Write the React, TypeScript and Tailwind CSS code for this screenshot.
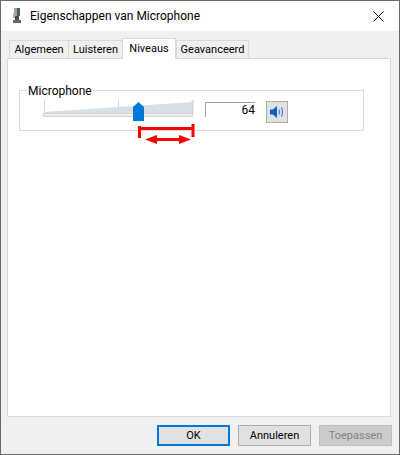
import { Fragment } from "react";

const tabs = [
  { label: "Algemeen", width: "w-[59px]" },
  { label: "Luisteren", width: "w-[54px]" },
  { label: "Niveaus", width: "w-[54px]", active: true },
  { label: "Geavanceerd", width: "w-[73px]" },
];

function MicIcon() {
  return (
    <svg width="16" height="20" viewBox="0 0 16 20">
      <rect x="5" y="2" width="3" height="8" fill="#a0a0a0" />
      <rect x="8" y="2" width="3" height="8" fill="#5a5a5a" />
      <rect x="6" y="10" width="4" height="4" fill="#4a4a4a" />
      <rect x="4" y="8" width="2" height="4" fill="#b0b0b0" />
      <rect x="4" y="14" width="8" height="3" fill="#666666" />
    </svg>
  );
}

function Slider() {
  return (
    <svg width="152" height="22" viewBox="0 0 152 22" className="block">
      <path d="M1.500 0V13M75.500 0V13" stroke="#d4d4d4" fill="none" />
      <path d="M149.500 0V13" stroke="#d4d4d4" strokeWidth="2" fill="none" />
      <path d="M1 12 L149 2 V13 H1Z" fill="#d8e0e7" />
      <rect x="0.500" y="13.500" width="149" height="3" fill="#eeeeee" stroke="#d4d4d4" />
      <path d="M90 21V7L95.500 2L101 7V21Z" fill="#0078d7" />
    </svg>
  );
}

function SpeakerIcon() {
  return (
    <svg width="16" height="14" viewBox="0 0 16 14">
      <path d="M1 4.500H4L8 1V13L4 9.500H1Z" fill="#0a62c4" />
      <path d="M10 4.500Q11.200 7 10 9.500M12.500 2.500Q14.500 7 12.500 11.500" fill="none" stroke="#3a86d8" strokeWidth="1.200" />
    </svg>
  );
}

function RedRange() {
  return (
    <svg width="58" height="24" viewBox="0 0 58 24" className="block">
      <path d="M1.500 3V15M55 1V14" stroke="#ff0000" strokeWidth="3" />
      <path d="M1 5.500H56" stroke="#ff0000" strokeWidth="3" />
      <path d="M7 16.500L19 12V15H41V12L53 16.500L41 21V18H19V21Z" fill="#ff0000" />
    </svg>
  );
}

export default function App() {
  return (
    <div className="flex h-[455px] w-[400px] flex-col border border-[#6a6a6a] bg-[#f0f0f0] font-['Roboto',sans-serif] text-[12px] leading-4 text-black">
      <div className="flex h-[30px] shrink-0 items-center bg-white pl-[8px] pr-[15px]">
        <MicIcon />
        <span className="ml-[5px]">Eigenschappen van Microphone</span>
        <svg width="11" height="11" viewBox="0 0 11 11" className="ml-auto">
          <path d="M0.500 0.500L10.500 10.500M10.500 0.500L0.500 10.500" stroke="#111111" />
        </svg>
      </div>

      <div className="flex h-[27px] shrink-0 items-end pl-2 text-[11px]">
        {tabs.map((tab) => (
          <Fragment key={tab.label}>
            {tab.active ? (
              <div className={`relative z-10 -mb-px flex h-[21px] items-start justify-center border border-b-0 border-[#d9d9d9] bg-white pt-[2px] ${tab.width}`}>
                {tab.label}
              </div>
            ) : (
              <div className={`flex h-[18px] items-center justify-center border border-r-0 border-b-0 border-[#d9d9d9] bg-[#f0f0f0] last:border-r ${tab.width}`}>
                {tab.label}
              </div>
            )}
          </Fragment>
        ))}
      </div>

      <div className="ml-[6px] h-[359px] w-[384px] border border-[#d9d9d9] bg-white pl-[11px] pt-[31px]">
        <fieldset className="h-[41px] w-[345px] border border-[#d9d9d9]">
          <div className="relative">
            <span className="absolute -top-[8px] left-[7px] bg-white px-px">Microphone</span>
          </div>
          <div className="flex items-start pl-[23px] pt-[9px]">
            <div className="relative">
              <Slider />
              <div className="absolute left-[95px] top-[23px]">
                <RedRange />
              </div>
            </div>
            <div className="ml-[10px] mt-[2px] flex h-[15px] w-[50px] items-center justify-end border-l border-t border-[#a0a0a0]">
              64
            </div>
            <button className="ml-[11px] mt-px flex h-[22px] w-[22px] items-center justify-center border border-[#adadad] bg-[#e1e1e1]">
              <SpeakerIcon />
            </button>
          </div>
        </fieldset>
      </div>

      <div className="flex justify-end gap-2 pr-[7px] pt-2 text-[11px]">
        <button className="h-[21px] w-[73px] border-2 border-[#0078d7] bg-[#e1e1e1]">OK</button>
        <button className="h-[21px] w-[73px] border border-[#adadad] bg-[#e1e1e1]">Annuleren</button>
        <button className="h-[21px] w-[73px] border border-[#bfbfbf] bg-[#cccccc] text-[#838383]">Toepassen</button>
      </div>
    </div>
  );
}
